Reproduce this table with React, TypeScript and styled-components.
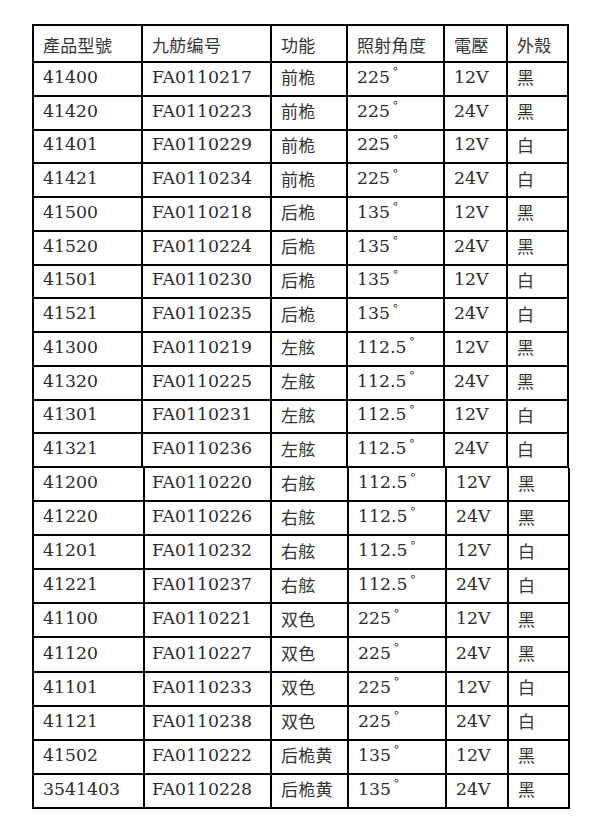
import React from "react";
import styled, { createGlobalStyle } from "styled-components";

const Global = createGlobalStyle`
  html, body { margin: 0; padding: 0; background: #ffffff; }
  body { font-family: "DejaVu Serif", "Noto Sans CJK SC", serif; }
`;

const Page = styled.div`
  width: 600px;
  height: 836px;
  padding: 24px 0 0 32px;
  box-sizing: border-box;
  display: flex;
  flex-direction: column;
`;

const Grid = styled.div<{ $cols: string; $rows: string; $continued?: boolean }>`
  display: grid;
  grid-template-columns: ${(p) => p.$cols};
  grid-template-rows: ${(p) => p.$rows};
  width: max-content;
  border-left: 2px solid #000;
  border-top: ${(p) => (p.$continued ? "none" : "2px solid #000")};
`;

const Cell = styled.div<{ $head?: boolean; $pad?: number }>`
  box-sizing: border-box;
  border-right: 2px solid #000;
  border-bottom: 2px solid #000;
  display: flex;
  align-items: center;
  padding: ${(p) => (p.$head ? `1px 0 0 ${p.$pad ?? 9}px` : `0 0 4px ${p.$pad ?? 9}px`)};
  font-family: "DejaVu Serif", "Noto Sans CJK SC", serif;
  font-size: 17.3px;
  color: #2b2b2b;
  white-space: nowrap;
  overflow: hidden;
`;

const Cjk = styled.span`
  font-family: "Noto Sans CJK SC", sans-serif;
  font-size: 17px;
  color: #333333;
  letter-spacing: 0.3px;
`;

const Deg = styled.span`
  font-family: "Noto Sans CJK SC", sans-serif;
  font-size: 13px;
  position: relative;
  top: -5px;
  margin-left: 3px;
`;

type Row = [string, string, string, string, string, string];

const header: Row = ["產品型號", "九舫编号", "功能", "照射角度", "電壓", "外殼"];

const upper: Row[] = [
  ["41400", "FA0110217", "前桅", "225", "12V", "黑"],
  ["41420", "FA0110223", "前桅", "225", "24V", "黑"],
  ["41401", "FA0110229", "前桅", "225", "12V", "白"],
  ["41421", "FA0110234", "前桅", "225", "24V", "白"],
  ["41500", "FA0110218", "后桅", "135", "12V", "黑"],
  ["41520", "FA0110224", "后桅", "135", "24V", "黑"],
  ["41501", "FA0110230", "后桅", "135", "12V", "白"],
  ["41521", "FA0110235", "后桅", "135", "24V", "白"],
  ["41300", "FA0110219", "左舷", "112.5", "12V", "黑"],
  ["41320", "FA0110225", "左舷", "112.5", "24V", "黑"],
  ["41301", "FA0110231", "左舷", "112.5", "12V", "白"],
  ["41321", "FA0110236", "左舷", "112.5", "24V", "白"],
];

const lower: Row[] = [
  ["41200", "FA0110220", "右舷", "112.5", "12V", "黑"],
  ["41220", "FA0110226", "右舷", "112.5", "24V", "黑"],
  ["41201", "FA0110232", "右舷", "112.5", "12V", "白"],
  ["41221", "FA0110237", "右舷", "112.5", "24V", "白"],
  ["41100", "FA0110221", "双色", "225", "12V", "黑"],
  ["41120", "FA0110227", "双色", "225", "24V", "黑"],
  ["41101", "FA0110233", "双色", "225", "12V", "白"],
  ["41121", "FA0110238", "双色", "225", "24V", "白"],
  ["41502", "FA0110222", "后桅黄", "135", "12V", "黑"],
  ["3541403", "FA0110228", "后桅黄", "135", "24V", "黑"],
];

const BodyRow: React.FC<{ row: Row; shifted?: boolean }> = ({ row, shifted }) => (
  <>
    <Cell>{row[0]}</Cell>
    <Cell $pad={shifted ? 7 : 9}>{row[1]}</Cell>
    <Cell>
      <Cjk>{row[2]}</Cjk>
    </Cell>
    <Cell>
      {row[3]}
      <Deg>°</Deg>
    </Cell>
    <Cell>{row[4]}</Cell>
    <Cell>
      <Cjk>{row[5]}</Cjk>
    </Cell>
  </>
);

export default function App() {
  return (
    <Page>
      <Global />
      <Grid $cols="109px 129px 76px 97px 63px 61px" $rows="37px repeat(12, 33.75px)">
        {header.map((h) => (
          <Cell key={h} $head>
            <Cjk>{h}</Cjk>
          </Cell>
        ))}
        {upper.map((r) => (
          <BodyRow key={r[0]} row={r} />
        ))}
      </Grid>
      <Grid $continued $cols="111px 127px 77px 98px 62px 61px" $rows="repeat(10, 34.1px)">
        {lower.map((r) => (
          <BodyRow key={r[0]} row={r} shifted />
        ))}
      </Grid>
    </Page>
  );
}
